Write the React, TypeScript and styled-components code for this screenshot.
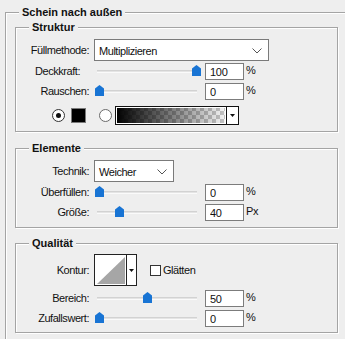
import React from 'react';
import styled, { createGlobalStyle } from 'styled-components';

const GlobalStyle = createGlobalStyle`
  html, body { margin: 0; padding: 0; background: #eeeeee; overflow: hidden; }
  body { font-family: "Liberation Sans", Arial, sans-serif; font-size: 11px; color: #111; }
`;

const Page = styled.div`
  width: 345px;
  height: 339px;
  overflow: hidden;
  background: #eeeeee;
`;

const Group = styled.fieldset<{ $outer?: boolean; $gap?: number }>`
  box-sizing: border-box;
  min-width: 0;
  border: 1px solid #a4a4a4;
  box-shadow: inset 1px 1px 0 #ffffff, 1px 1px 0 #ffffff;
  margin: ${(p) => (p.$outer ? '6px 0 0 5px' : `0 0 ${p.$gap ?? 0}px 0`)};
  padding: ${(p) => (p.$outer ? '2px 0 30px 9px' : '0')};
  width: ${(p) => (p.$outer ? '380px' : '323px')};
`;

const Legend = styled.legend<{ $outer?: boolean }>`
  font-weight: bold;
  font-size: 11px;
  line-height: 13px;
  padding: 0 3px;
  margin-left: ${(p) => (p.$outer ? '4px' : '13px')};
  background: #eeeeee;
  color: #111;
`;

const Body = styled.div<{ $top: number; $bottom: number }>`
  display: flex;
  flex-direction: column;
  padding: ${(p) => p.$top}px 0 ${(p) => p.$bottom}px 0;
`;

const Row = styled.div<{ $h: number; $mt?: number; $indent?: number }>`
  display: flex;
  align-items: center;
  height: ${(p) => p.$h}px;
  margin-top: ${(p) => p.$mt ?? 0}px;
  padding-left: ${(p) => p.$indent ?? 0}px;
`;

const Label = styled.div<{ $pr?: number }>`
  flex: none;
  box-sizing: border-box;
  width: 73px;
  margin-right: 5px;
  padding-right: ${(p) => p.$pr ?? 0}px;
  text-align: right;
  white-space: nowrap;
  letter-spacing: -0.45px;
`;

const Select = styled.div<{ $w: number }>`
  box-sizing: border-box;
  width: ${(p) => p.$w}px;
  height: 22px;
  border: 1px solid #7a7a7a;
  background: #ffffff;
  display: flex;
  align-items: center;
  justify-content: space-between;
  padding: 1px 6px 0 4px;
  letter-spacing: -0.45px;
`;

const SliderBox = styled.div`
  position: relative;
  flex: none;
  width: 106px;
  height: 20px;
  margin-right: 5px;
`;

const Track = styled.div`
  position: absolute;
  left: 3px;
  right: 3px;
  top: 9px;
  height: 3px;
  box-sizing: border-box;
  background: #e4e4e4;
  border-top: 1px solid #d2d2d2;
  border-bottom: 1px solid #fafafa;
`;

const Thumb = styled.svg`
  position: absolute;
  top: 4px;
`;

const Field = styled.input`
  box-sizing: border-box;
  width: 39px;
  height: 17px;
  border: 1px solid #7c7c7c;
  background: #ffffff;
  padding: 1px 4px 0 4px;
  margin: 0;
  font-family: "Liberation Sans", Arial, sans-serif;
  font-size: 11px;
  letter-spacing: -0.3px;
  color: #111;
  outline: none;
`;

const Unit = styled.span`
  margin-left: 2px;
  margin-bottom: 3px;
  letter-spacing: -0.3px;
`;

const Radio = styled.div<{ $on?: boolean }>`
  flex: none;
  box-sizing: border-box;
  width: 13px;
  height: 13px;
  border-radius: 50%;
  border: 1px solid ${(p) => (p.$on ? '#333333' : '#6a6a6a')};
  background: #ffffff;
  display: flex;
  align-items: center;
  justify-content: center;
  &::after {
    content: '';
    display: ${(p) => (p.$on ? 'block' : 'none')};
    width: 5px;
    height: 5px;
    border-radius: 50%;
    background: #111111;
  }
`;

const Swatch = styled.div`
  flex: none;
  box-sizing: border-box;
  width: 15px;
  height: 15px;
  margin-left: 6px;
  margin-right: 13px;
  background: #000000;
  border: 1px solid #7a7a7a;
`;

const GradientPicker = styled.div`
  flex: none;
  box-sizing: border-box;
  width: 124px;
  height: 19px;
  margin-left: 3px;
  border: 1px solid #111111;
  display: flex;
  background: #ffffff;
`;

const GradientFill = styled.div`
  flex: 1;
  box-shadow: inset 0 0 0 1px #ffffff;
  background-image: linear-gradient(to right, #000000 0%, rgba(0, 0, 0, 0) 100%),
    repeating-conic-gradient(#c4c4c4 0 25%, #f6f6f6 0 50%);
  background-size: 100% 100%, 8px 8px;
`;

const DropButton = styled.div`
  flex: none;
  width: 11px;
  border-left: 1px solid #111111;
  background: #ffffff;
  display: flex;
  align-items: center;
  justify-content: center;
`;

const ContourPicker = styled.div`
  flex: none;
  box-sizing: border-box;
  width: 43px;
  height: 32px;
  border: 1px solid #222222;
  background: #ffffff;
  display: flex;
`;

const ContourPreview = styled.div`
  flex: none;
  width: 31px;
  padding: 2px 0 0 2px;
  box-sizing: border-box;
`;

const ContourDrop = styled.div`
  flex: 1;
  border-left: 1px solid #222222;
  display: flex;
  align-items: center;
  justify-content: center;
`;

const Check = styled.div`
  flex: none;
  box-sizing: border-box;
  width: 11px;
  height: 11px;
  margin-left: 13px;
  margin-right: 2px;
  border: 1px solid #333333;
  background: #ffffff;
`;

const Text = styled.span`
  letter-spacing: -0.45px;
`;

const Chevron = () => (
  <svg width="10" height="6" viewBox="0 0 10 6">
    <polyline points="0.5,0.5 5,5 9.5,0.5" fill="none" stroke="#555" strokeWidth="1" />
  </svg>
);

const DropArrow = () => (
  <svg width="5" height="3" viewBox="0 0 5 3">
    <polygon points="0,0 5,0 2.5,3" fill="#111" />
  </svg>
);

const Slider = ({ pos }: { pos: number }) => (
  <SliderBox>
    <Track />
    <Thumb width="9" height="11" viewBox="0 0 9 11" style={{ left: `${1 + pos * 97}px` }}>
      <polygon points="4.5,0 9,3.5 9,11 0,11 0,3.5" fill="#1874d4" />
    </Thumb>
  </SliderBox>
);

const SliderRow = ({
  label,
  pos,
  value,
  unit,
  pr,
  mt,
}: {
  label: string;
  pos: number;
  value: string;
  unit: string;
  pr?: number;
  mt?: number;
}) => (
  <Row $h={20} $mt={mt}>
    <Label $pr={pr}>{label}</Label>
    <Slider pos={pos} />
    <Field readOnly value={value} />
    <Unit>{unit}</Unit>
  </Row>
);

export default function App() {
  return (
    <>
      <GlobalStyle />
      <Page>
        <Group $outer>
          <Legend $outer>Schein nach außen</Legend>

          <Group $gap={10}>
            <Legend>Struktur</Legend>
            <Body $top={5} $bottom={4}>
              <Row $h={22}>
                <Label>Füllmethode:</Label>
                <Select $w={175}>
                  <span>Multiplizieren</span>
                  <Chevron />
                </Select>
              </Row>
              <SliderRow label="Deckkraft:" pos={1} value="100" unit="%" pr={9} />
              <SliderRow label="Rauschen:" pos={0} value="0" unit="%" />
              <Row $h={23} $mt={3} $indent={36}>
                <Radio $on />
                <Swatch />
                <Radio />
                <GradientPicker>
                  <GradientFill />
                  <DropButton>
                    <DropArrow />
                  </DropButton>
                </GradientPicker>
              </Row>
            </Body>
          </Group>

          <Group $gap={9}>
            <Legend>Elemente</Legend>
            <Body $top={5} $bottom={5}>
              <Row $h={22}>
                <Label>Technik:</Label>
                <Select $w={80}>
                  <span>Weicher</span>
                  <Chevron />
                </Select>
              </Row>
              <SliderRow label="Überfüllen:" pos={0} value="0" unit="%" />
              <SliderRow label="Größe:" pos={0.206} value="40" unit="Px" />
            </Body>
          </Group>

          <Group>
            <Legend>Qualität</Legend>
            <Body $top={4} $bottom={4}>
              <Row $h={32}>
                <Label>Kontur:</Label>
                <ContourPicker>
                  <ContourPreview>
                    <svg width="28" height="27" viewBox="0 0 28 27">
                      <polygon points="0,27 28,0 28,27" fill="#a6a6a6" />
                    </svg>
                  </ContourPreview>
                  <ContourDrop>
                    <DropArrow />
                  </ContourDrop>
                </ContourPicker>
                <Check />
                <Text>Glätten</Text>
              </Row>
              <SliderRow label="Bereich:" pos={0.495} value="50" unit="%" mt={2} />
              <SliderRow label="Zufallswert:" pos={0} value="0" unit="%" />
            </Body>
          </Group>
        </Group>
      </Page>
    </>
  );
}
